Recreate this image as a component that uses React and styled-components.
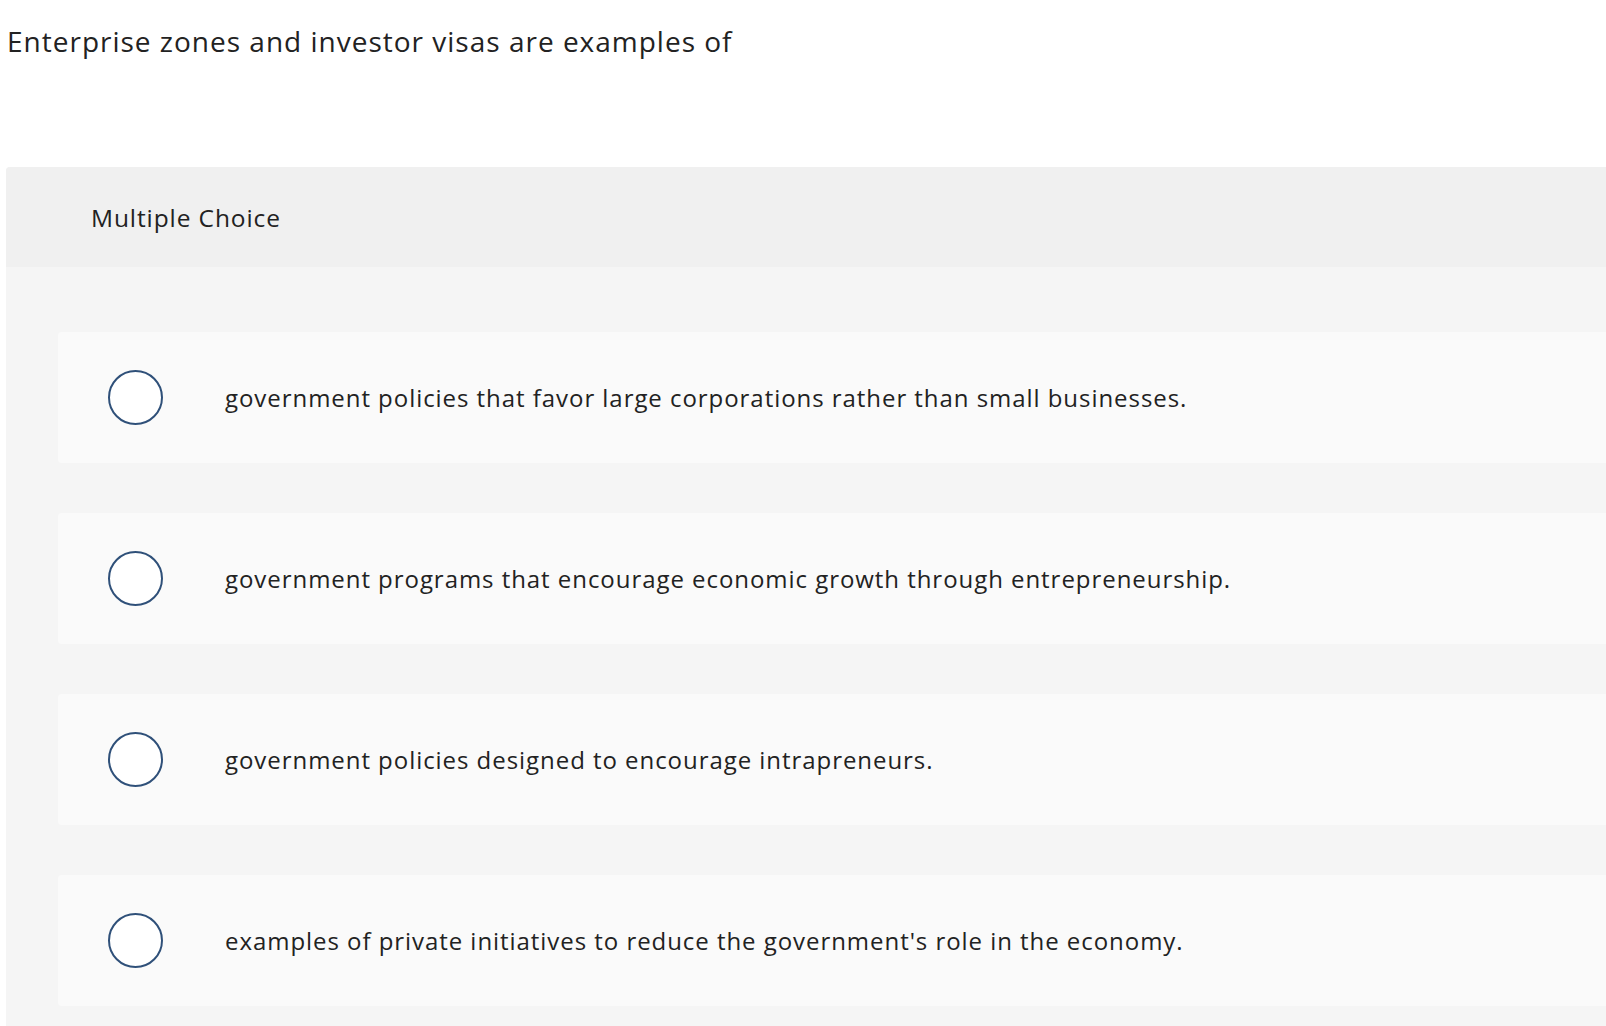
import React from "react";
import styled, { createGlobalStyle } from "styled-components";

const Global = createGlobalStyle`
  html, body { margin: 0; padding: 0; background: #ffffff; overflow: hidden; }
  body {
    font-family: "Open Sans", Lato, "Liberation Sans", sans-serif;
    color: #222222;
    font-variant-ligatures: none;
  }
`;

const Page = styled.div`
  display: flex;
  flex-direction: column;
  min-height: 1026px;
`;

const Question = styled.h1`
  margin: 0;
  padding: 22px 0 0 7px;
  height: 167px;
  box-sizing: border-box;
  font-size: 28px;
  line-height: 38px;
  font-weight: 400;
  letter-spacing: 1px;
  color: #222222;
`;

const Panel = styled.section`
  margin-left: 6px;
  margin-right: -40px;
  border-radius: 4px 0 0 0;
  background: #f5f5f5;
  flex: 1;
  display: flex;
  flex-direction: column;
`;

const PanelHeader = styled.div`
  height: 100px;
  display: flex;
  align-items: center;
  padding-left: 85px;
  background: #f0f0f0;
  border-radius: 4px 0 0 0;
  font-size: 24.5px;
  letter-spacing: 0.9px;
  color: #222222;
`;

const Options = styled.div`
  display: flex;
  flex-direction: column;
  gap: 50px;
  padding: 65px 0 30px 52px;
`;

const OptionCard = styled.label`
  height: 131px;
  display: flex;
  align-items: center;
  padding-left: 50px;
  background: #fafafa;
  border-radius: 4px 0 0 4px;
  cursor: pointer;
`;

const Radio = styled.span`
  flex: none;
  width: 55px;
  height: 55px;
  box-sizing: border-box;
  border-radius: 50%;
  border: 2px solid #2f5079;
  background: #ffffff;
  margin-right: 62px;
`;

const OptionText = styled.span`
  font-size: 24px;
  letter-spacing: 0.95px;
  color: #222222;
`;

const choices = [
  "government policies that favor large corporations rather than small businesses.",
  "government programs that encourage economic growth through entrepreneurship.",
  "government policies designed to encourage intrapreneurs.",
  "examples of private initiatives to reduce the government's role in the economy.",
];

export default function App() {
  return (
    <Page>
      <Global />
      <Question>Enterprise zones and investor visas are examples of</Question>
      <Panel>
        <PanelHeader>Multiple Choice</PanelHeader>
        <Options>
          {choices.map((c) => (
            <OptionCard key={c}>
              <Radio />
              <OptionText>{c}</OptionText>
            </OptionCard>
          ))}
        </Options>
      </Panel>
    </Page>
  );
}
